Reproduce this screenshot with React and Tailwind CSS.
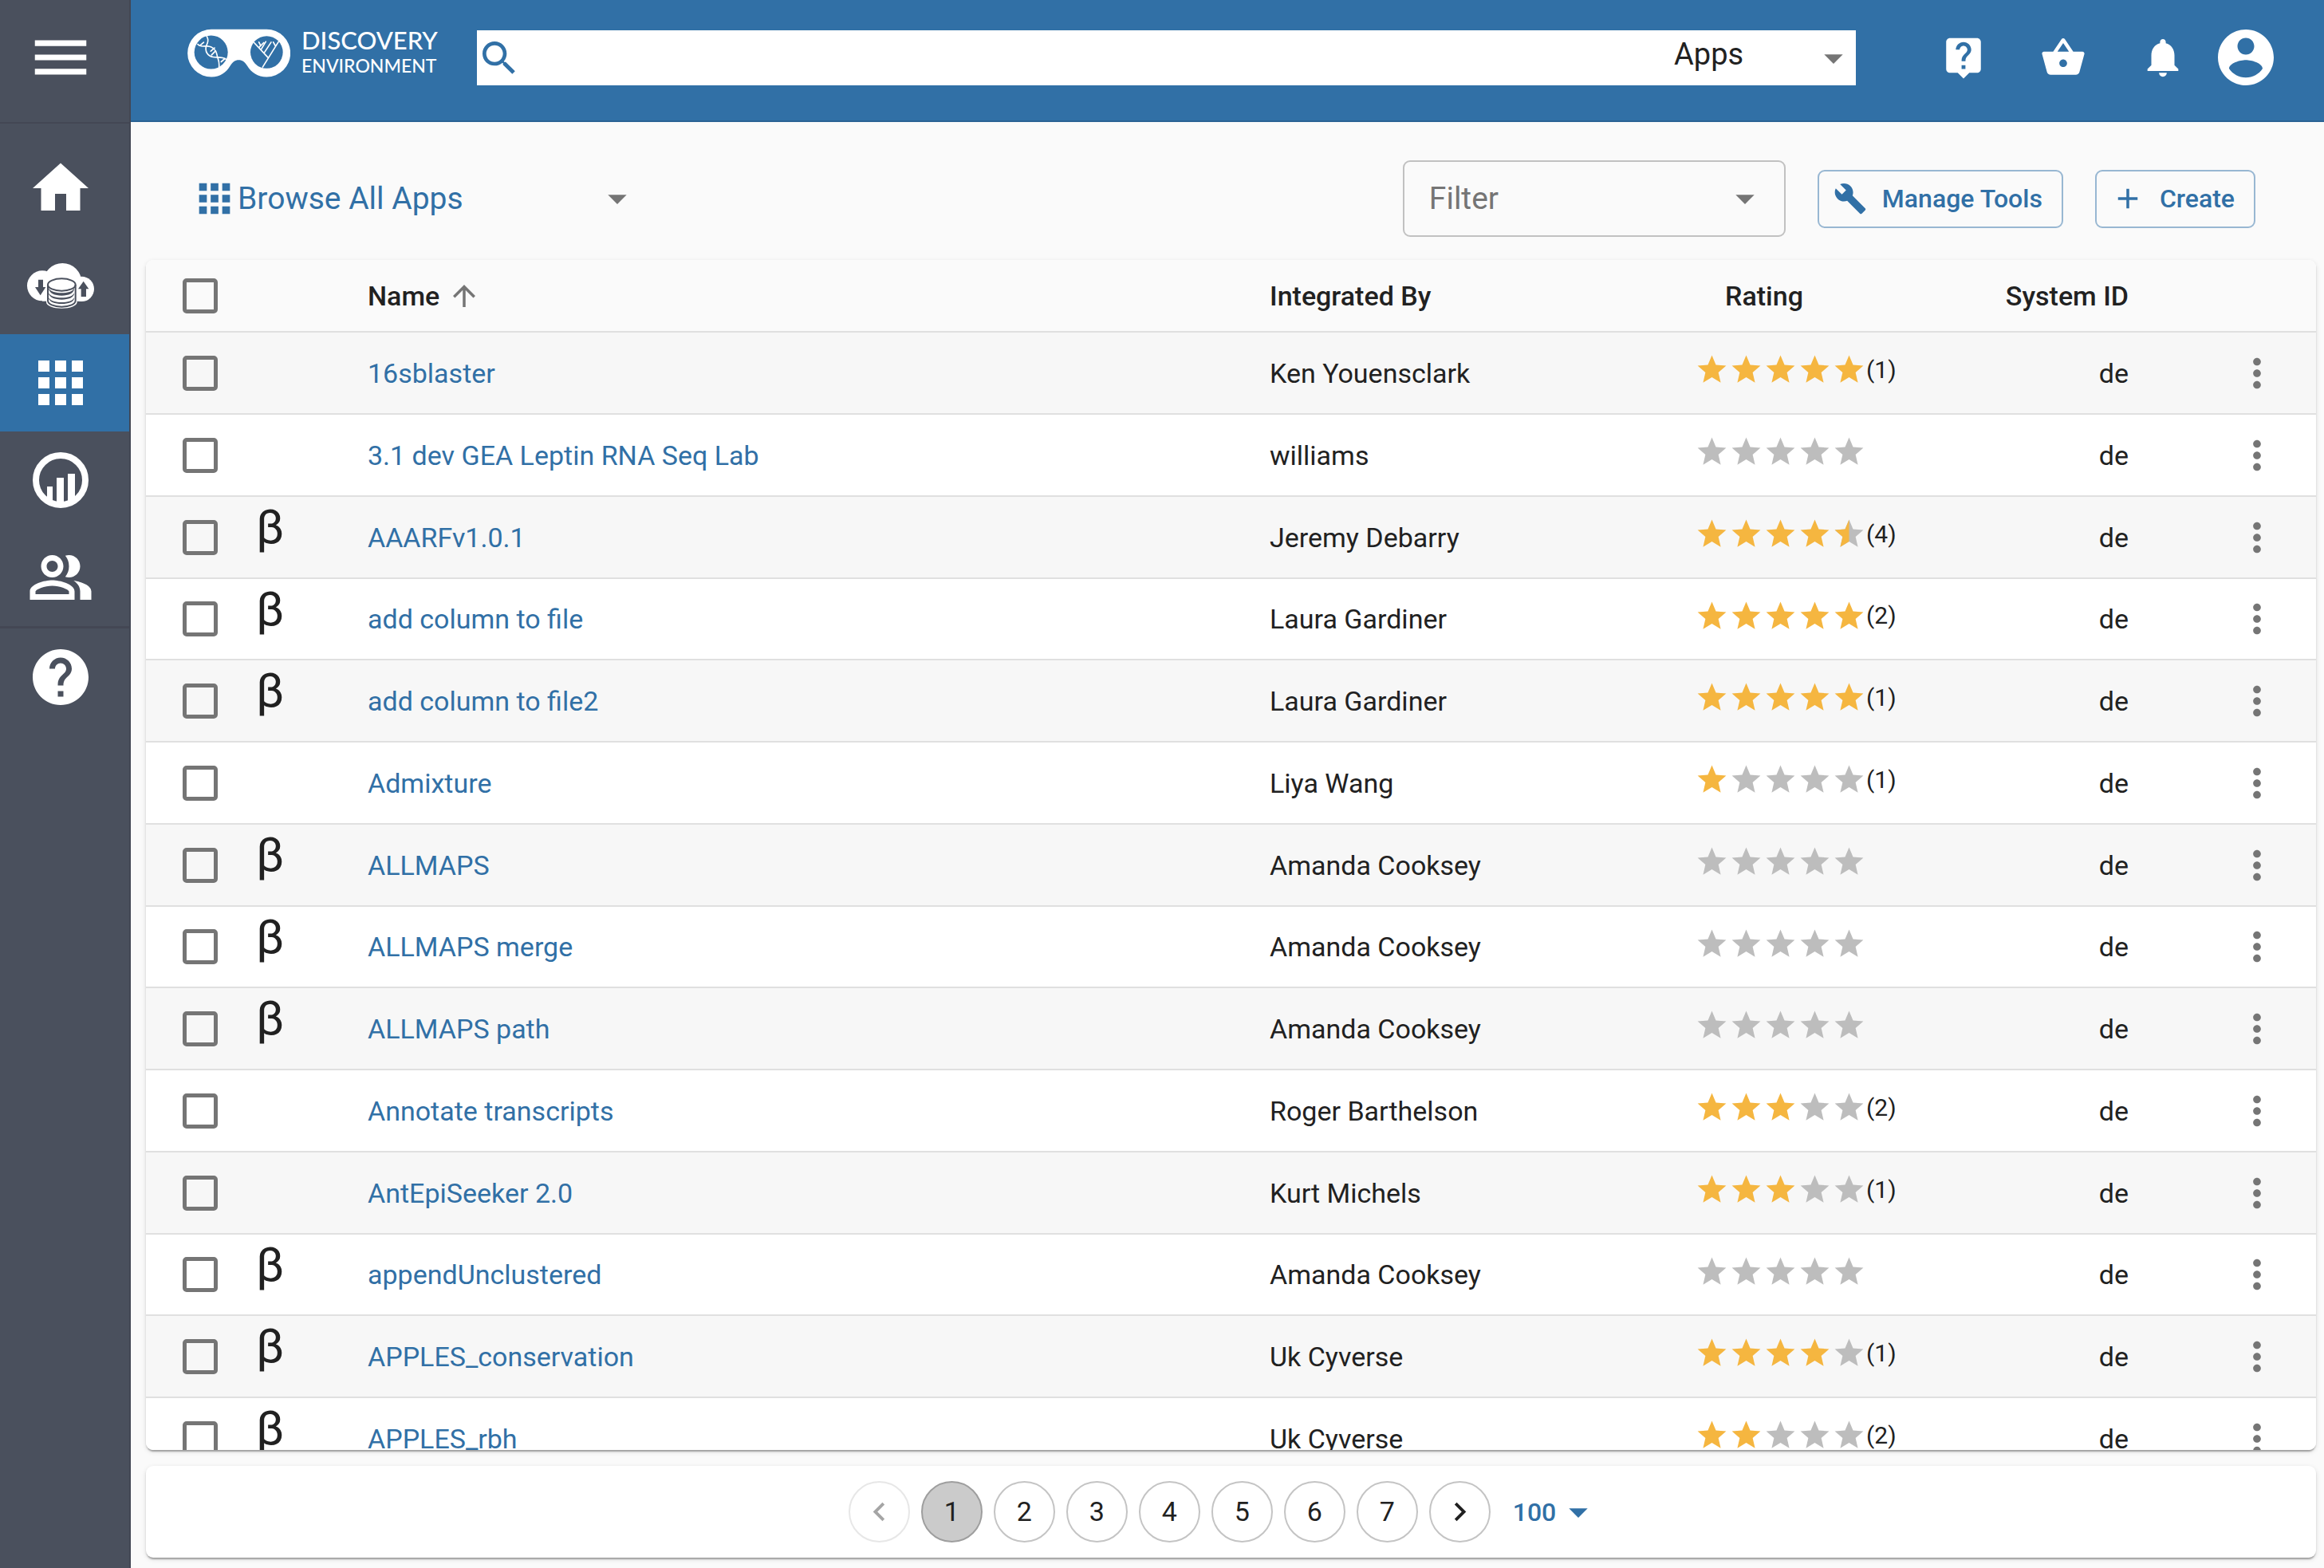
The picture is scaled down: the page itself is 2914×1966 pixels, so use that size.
import React from "react";

const PATHS = {
  menu: "M3 18h18v-2H3v2zm0-5h18v-2H3v2zm0-7v2h18V6H3z",
  home: "M10 20v-6h4v6h5v-8h3L12 3 2 12h3v8z",
  apps: "M4 8h4V4H4v4zm6 12h4v-4h-4v4zm-6 0h4v-4H4v4zm0-6h4v-4H4v4zm6 0h4v-4h-4v4zm6-10v4h4V4h-4zm-6 4h4V4h-4v4zm6 6h4v-4h-4v4zm0 6h4v-4h-4v4z",
  people:
    "M16.67 13.13C18.04 14.06 19 15.32 19 17v3h4v-3c0-2.18-3.57-3.47-6.33-3.87zM15 12c2.21 0 4-1.79 4-4s-1.79-4-4-4c-.47 0-.91.1-1.33.24a5.98 5.98 0 010 7.52c.42.14.86.24 1.33.24zM9 12c2.21 0 4-1.79 4-4s-1.79-4-4-4-4 1.79-4 4 1.79 4 4 4zm0-6c1.1 0 2 .9 2 2s-.9 2-2 2-2-.9-2-2 .9-2 2-2zM9 13c-2.67 0-8 1.34-8 4v3h16v-3c0-2.66-5.33-4-8-4zm6 5H3v-.99C3.2 16.29 6.3 15 9 15s5.8 1.29 6 2v1z",
  help: "M12 2C6.48 2 2 6.48 2 12s4.48 10 10 10 10-4.48 10-10S17.52 2 12 2zm1 17h-2v-2h2v2zm2.07-7.75l-.9.92C13.45 12.9 13 13.5 13 15h-2v-.5c0-1.1.45-2.1 1.17-2.83l1.24-1.26c.37-.36.59-.86.59-1.41 0-1.1-.9-2-2-2s-2 .9-2 2H8c0-2.21 1.79-4 4-4s4 1.79 4 4c0 .88-.36 1.68-.93 2.25z",
  search:
    "M15.5 14h-.79l-.28-.27C15.41 12.59 16 11.11 16 9.5 16 5.91 13.09 3 9.5 3S3 5.91 3 9.5 5.91 16 9.5 16c1.61 0 3.09-.59 4.23-1.57l.27.28v.79l5 4.99L20.49 19l-4.99-5zm-6 0C7.01 14 5 11.99 5 9.5S7.01 5 9.5 5 14 7.01 14 9.5 11.99 14 9.5 14z",
  dropDown: "M7 10l5 5 5-5z",
  liveHelp:
    "M19 2H5c-1.11 0-2 .9-2 2v14c0 1.1.89 2 2 2h4l3 3 3-3h4c1.1 0 2-.9 2-2V4c0-1.1-.9-2-2-2zm-6 16h-2v-2h2v2zm2.07-7.75l-.9.92C13.45 11.9 13 12.5 13 14h-2v-.5c0-1.1.45-2.1 1.17-2.83l1.24-1.26c.37-.36.59-.86.59-1.41 0-1.1-.9-2-2-2s-2 .9-2 2H8c0-2.21 1.79-4 4-4s4 1.79 4 4c0 .88-.36 1.68-.93 2.25z",
  basket:
    "M17.21 9l-4.38-6.56c-.19-.28-.51-.42-.83-.42-.32 0-.64.14-.83.43L6.79 9H2c-.55 0-1 .45-1 1 0 .09.01.18.04.27l2.54 9.27c.23.84 1 1.46 1.92 1.46h13c.92 0 1.69-.62 1.93-1.46l2.54-9.27L23 10c0-.55-.45-1-1-1h-4.79zM9 9l3-4.4L15 9H9zm3 8c-1.1 0-2-.9-2-2s.9-2 2-2 2 .9 2 2-.9 2-2 2z",
  bell: "M12 22c1.1 0 2-.9 2-2h-4c0 1.1.89 2 2 2zm6-6v-5c0-3.07-1.64-5.64-4.5-6.32V4c0-.83-.67-1.5-1.5-1.5s-1.5.67-1.5 1.5v.68C7.63 5.36 6 7.92 6 11v5l-2 2v1h16v-1l-2-2z",
  account:
    "M12 2C6.48 2 2 6.48 2 12s4.48 10 10 10 10-4.48 10-10S17.52 2 12 2zm0 3c1.66 0 3 1.34 3 3s-1.34 3-3 3-3-1.34-3-3 1.34-3 3-3zm0 14.2c-2.5 0-4.71-1.28-6-3.22.03-1.99 4-3.08 6-3.08 1.99 0 5.97 1.09 6 3.08-1.29 1.94-3.5 3.22-6 3.22z",
  wrench:
    "M22.7 19l-9.1-9.1c.9-2.3.4-5-1.5-6.9-2-2-5-2.4-7.4-1.3L9 6 6 9 1.6 4.7C.4 7.1.9 10.1 2.9 12.1c1.9 1.9 4.6 2.4 6.9 1.5l9.1 9.1c.4.4 1 .4 1.4 0l2.3-2.3c.5-.4.5-1.1.1-1.4z",
  plus: "M19 13h-6v6h-2v-6H5v-2h6V5h2v6h6v2z",
  arrowUp: "M4 12l1.41 1.41L11 7.83V20h2V7.83l5.58 5.59L20 12l-8-8-8 8z",
  star: "M12 17.27L18.18 21l-1.64-7.03L22 9.24l-7.19-.61L12 2 9.19 8.63 2 9.24l5.46 4.73L5.82 21z",
  more: "M12 8c1.1 0 2-.9 2-2s-.9-2-2-2-2 .9-2 2 .9 2 2 2zm0 2c-1.1 0-2 .9-2 2s.9 2 2 2 2-.9 2-2-.9-2-2-2zm0 6c-1.1 0-2 .9-2 2s.9 2 2 2 2-.9 2-2-.9-2-2-2z",
  prev: "M15.41 7.41L14 6l-6 6 6 6 1.41-1.41L10.83 12z",
  next: "M10 6L8.59 7.41 13.17 12l-4.58 4.59L10 18l6-6z",
};

function Icon({ name, className }) {
  return (
    <svg viewBox="0 0 24 24" fill="currentColor" aria-hidden="true" className={"shrink-0 " + className}>
      <path d={PATHS[name]} />
    </svg>
  );
}

function CloudDataIcon() {
  return (
    <svg viewBox="36 54 264 180" className="h-[60px] w-[88px]" aria-hidden="true">
      <g fill="#fff">
        <circle cx="99" cy="145" r="57" />
        <circle cx="175" cy="132" r="72" />
        <circle cx="247" cy="157" r="47" />
        <rect x="99" y="150" width="148" height="53" />
        <path d="M114 140h116v66c0 14-26 24-58 24s-58-10-58-24z" />
      </g>
      <g fill="#4a505d">
        <path d="M84 122h18v28h10l-20 31-20-31h12z" />
        <path d="M254 128l20 29h-10v29h-19v-29h-11z" />
        <path d="M122 158c10 14 28 18 50 18s40-4 48-18c-2 20-22 28-48 28s-46-8-50-28z" transform="translate(0 -4)" />
        <path d="M122 158c10 14 28 18 50 18s40-4 48-18c-2 18-22 25-48 25s-46-7-50-25z" transform="translate(0 14)" />
        <path d="M122 158c10 14 28 18 50 18s40-4 48-18c-2 18-22 24-48 24s-46-6-50-24z" transform="translate(0 31)" />
      </g>
      <g fill="none" stroke="#4a505d" strokeWidth="6">
        <ellipse cx="172" cy="141" rx="52" ry="23" fill="#fff" />
        <path d="M120 141v60c0 13 22 23 52 23s52-10 52-23v-60" />
      </g>
    </svg>
  );
}

function AnalyticsIcon() {
  return (
    <svg viewBox="0 0 84 84" className="size-[84px]" aria-hidden="true">
      <circle cx="42" cy="42" r="31" fill="none" stroke="#fff" strokeWidth="8" />
      <g fill="#fff">
        <path d="M25 50h7v20l-7-5z" />
        <path d="M37 39h9v31h-9z" />
        <path d="M51 34h9v31l-9 5z" />
      </g>
    </svg>
  );
}

function LogoMark() {
  return (
    <svg viewBox="45 54 387 182" className="h-[61px] w-[129px] shrink-0" aria-hidden="true">
      <path
        fill="#fff"
        d="M135 56H343a89 89 0 0 1 0 179c-34 0-58-17-73-42-10-16-18-22-32-22s-22 6-32 22c-15 25-37 42-71 42a89 89 0 0 1 0-179z"
      />
      <circle cx="134" cy="142" r="63" fill="#3170a6" />
      <circle cx="343" cy="142" r="61" fill="#3170a6" />
      <g fill="none" stroke="#fff" strokeWidth="5" strokeLinecap="round">
        <path d="M118 82c8 16 3 24-2 36-6 20 4 38 26 42 18 3 34-2 48 8" />
        <path d="M84 112c10 12 22 6 36 7 24 2 32 14 36 32 2 16 10 20 8 46" />
        <path d="M92 117l14-12M133 138l14-12M136 152l14-14M172 178l14-12" />
        <path d="M296 106l52 56M388 102l-60 96M322 132l18-30M334 144l26-40M314 104l6 12M368 104l8 14M316 122l16-16" />
      </g>
    </svg>
  );
}

const NAV = [
  { label: "Home", icon: <Icon name="home" className="size-[84px]" /> },
  { label: "Data", icon: <CloudDataIcon /> },
  { label: "Apps", icon: <Icon name="apps" className="size-[84px]" />, active: true },
  { label: "Analyses", icon: <AnalyticsIcon /> },
  { label: "Teams", icon: <Icon name="people" className="size-[84px]" /> },
];

function Sidebar() {
  return (
    <nav className="flex w-[164px] shrink-0 flex-col border-r-2 border-[#434754] bg-[#4a505d] text-white">
      <div className="flex h-[155px] shrink-0 items-start justify-center border-b-2 border-[#434754] pt-[29px] pr-[10px]">
        <button type="button" aria-label="Menu">
          <Icon name="menu" className="size-[86px]" />
        </button>
      </div>
      <div className="border-b-3 border-[#434754] pt-5">
        {NAV.map((item) => (
          <a
            key={item.label}
            href="#"
            aria-label={item.label}
            className={
              "flex h-[122px] items-center justify-center pr-[10px] " + (item.active ? "bg-[#3170a6]" : "")
            }
          >
            {item.icon}
          </a>
        ))}
      </div>
      <a href="#" aria-label="Help" className="flex h-[122px] items-center justify-center pr-[10px]">
        <Icon name="help" className="size-[84px]" />
      </a>
    </nav>
  );
}

function Header() {
  return (
    <header className="flex h-[153px] shrink-0 items-start border-b-2 border-[#2a6294] bg-[#3170a6] pl-[71px] pr-14 text-white">
      <a href="#" className="flex w-[363px] shrink-0 items-center gap-[14px] pt-[34px] font-['Lato',sans-serif] font-medium">
        <LogoMark />
        <span className="flex flex-col">
          <span className="text-[31px] leading-8">DISCOVERY</span>
          <span className="text-[23px] leading-8">ENVIRONMENT</span>
        </span>
      </a>
      <div className="mt-[38px] mr-[72px] flex h-[69px] min-w-0 flex-1 items-center bg-white">
        <Icon name="search" className="size-14 text-[#3170a6]" />
        <input type="text" aria-label="Search" className="h-full min-w-0 flex-1 text-[38px] text-[#212121] outline-none" />
        <div className="relative flex h-full w-[228px] items-center">
          <select
            aria-label="Search category"
            defaultValue="Apps"
            className="h-full w-full appearance-none pb-2 text-[38px] text-[#212121] outline-none"
          >
            <option>Apps</option>
          </select>
          <Icon name="dropDown" className="pointer-events-none absolute right-0 size-14 text-[#757575]" />
        </div>
      </div>
      {["liveHelp", "basket", "bell"].map((n) => (
        <button key={n} type="button" aria-label={n} className="mt-[30px] flex h-[84px] w-[125px] items-center justify-center">
          <Icon name={n} className="size-[58px]" />
        </button>
      ))}
      <button type="button" aria-label="Account" className="mt-[30px]">
        <Icon name="account" className="size-[84px]" />
      </button>
    </header>
  );
}

function ToolButton({ icon, children }) {
  return (
    <button
      type="button"
      className="flex h-[73px] items-center gap-[19px] rounded-[9px] border-2 border-[#98b7d2] pl-[18px] pr-6 text-[32px] font-medium text-[#3170a6]"
    >
      <Icon name={icon} className="size-[42px]" />
      {children}
    </button>
  );
}

function Toolbar() {
  return (
    <div className="flex items-center gap-10 pt-12 pr-[76px] pb-[29px] pl-[57px]">
      <div className="relative mr-auto flex w-[562px] items-center text-[#3170a6]">
        <Icon name="apps" className="size-[58px]" />
        <select aria-label="Browse" defaultValue="Browse All Apps" className="w-full appearance-none text-[39px] outline-none">
          <option>Browse All Apps</option>
        </select>
        <Icon name="dropDown" className="pointer-events-none absolute right-0 size-14 text-[#757575]" />
      </div>
      <div className="relative flex w-[480px] items-center">
        <select
          aria-label="Filter"
          defaultValue="Filter"
          className="h-24 w-full appearance-none rounded-[9px] border-2 border-[#c1c1c1] pl-[31px] text-[39px] text-[#757575] outline-none"
        >
          <option>Filter</option>
        </select>
        <Icon name="dropDown" className="pointer-events-none absolute right-[23px] size-14 text-[#757575]" />
      </div>
      <ToolButton icon="wrench">Manage Tools</ToolButton>
      <ToolButton icon="plus">Create</ToolButton>
    </div>
  );
}

const APPS = [
  { name: "16sblaster", by: "Ken Youensclark", rating: 5, votes: 1 },
  { name: "3.1 dev GEA Leptin RNA Seq Lab", by: "williams", rating: 0 },
  { name: "AAARFv1.0.1", by: "Jeremy Debarry", rating: 4.5, votes: 4, beta: true },
  { name: "add column to file", by: "Laura Gardiner", rating: 5, votes: 2, beta: true },
  { name: "add column to file2", by: "Laura Gardiner", rating: 5, votes: 1, beta: true },
  { name: "Admixture", by: "Liya Wang", rating: 1, votes: 1 },
  { name: "ALLMAPS", by: "Amanda Cooksey", rating: 0, beta: true },
  { name: "ALLMAPS merge", by: "Amanda Cooksey", rating: 0, beta: true },
  { name: "ALLMAPS path", by: "Amanda Cooksey", rating: 0, beta: true },
  { name: "Annotate transcripts", by: "Roger Barthelson", rating: 3, votes: 2 },
  { name: "AntEpiSeeker 2.0", by: "Kurt Michels", rating: 3, votes: 1 },
  { name: "appendUnclustered", by: "Amanda Cooksey", rating: 0, beta: true },
  { name: "APPLES_conservation", by: "Uk Cyverse", rating: 4, votes: 1, beta: true },
  { name: "APPLES_rbh", by: "Uk Cyverse", rating: 2, votes: 2, beta: true },
];

function Star({ fill }) {
  return (
    <svg viewBox="0 0 24 24" className="size-[43px] shrink-0" aria-hidden="true">
      <path d={PATHS.star} fill={fill === 1 ? "#f5b640" : "#bdbdbd"} />
      {fill === 0.5 && <path d="M12 2v15.27L5.82 21l1.64-7.03L2 9.24l7.19-.61z" fill="#f5b640" />}
    </svg>
  );
}

function Rating({ value, votes }) {
  return (
    <div className="flex items-center pb-2" aria-label={value + " stars"}>
      {[0, 1, 2, 3, 4].map((i) => (
        <Star key={i} fill={Math.max(0, Math.min(1, value - i))} />
      ))}
      {votes && <span className="text-[30px] leading-10">({votes})</span>}
    </div>
  );
}

function Check({ label }) {
  return (
    <input
      type="checkbox"
      aria-label={label}
      className="block size-11 appearance-none rounded-[5px] border-5 border-[#757575]"
    />
  );
}

function AppsTable() {
  return (
    <section className="min-h-0 flex-1 overflow-hidden rounded-[9px] bg-white shadow-[0_4px_2px_-2px_rgba(0,0,0,0.2),0_2px_2px_0_rgba(0,0,0,0.14),0_2px_6px_0_rgba(0,0,0,0.12)]">
      <table className="w-full table-fixed border-separate border-spacing-0 text-left text-[34px] leading-10 text-[#212121] [&_td]:border-b-2 [&_td]:border-[#e0e0e0] [&_th]:border-b-2 [&_th]:border-[#e0e0e0]">
        <thead>
          <tr className="h-[91px] bg-[#fafafa] [&>th]:font-medium">
            <th className="w-[132px] pl-[46px]">
              <Check label="Select all" />
            </th>
            <th className="w-[109px]" />
            <th className="pl-[37px]" aria-sort="ascending">
              <button type="button" className="flex items-center gap-[10px]">
                Name
                <Icon name="arrowUp" className="size-[42px] text-[#757575]" />
              </button>
            </th>
            <th className="w-[533px] pl-[37px]">Integrated By</th>
            <th className="w-[382px] pl-[75px]">Rating</th>
            <th className="w-[236px] pr-[37px] text-right whitespace-nowrap">System ID</th>
            <th className="w-[198px]" />
          </tr>
        </thead>
        <tbody>
          {APPS.map((app) => (
            <tr key={app.name} className="h-[103px] odd:bg-[#f7f7f7] even:bg-white nth-[4n]:h-[102px]">
              <td className="pl-[46px]">
                <Check label={"Select " + app.name} />
              </td>
              <td className="pl-[6px] text-[60px] leading-[76px] align-top">{app.beta && "β"}</td>
              <td className="pl-[37px]">
                <a href="#" className="text-[#3170a6]">
                  {app.name}
                </a>
              </td>
              <td className="pl-[37px]">{app.by}</td>
              <td className="pl-[37px]">
                <Rating value={app.rating} votes={app.votes} />
              </td>
              <td className="pr-[37px] text-right">de</td>
              <td className="pr-[45px]">
                <button type="button" aria-label={"More actions for " + app.name} className="ml-auto block text-[#757575]">
                  <Icon name="more" className="size-[58px]" />
                </button>
              </td>
            </tr>
          ))}
        </tbody>
      </table>
    </section>
  );
}

function Pagination() {
  return (
    <footer className="mt-5 flex shrink-0 items-center justify-center gap-[14px] rounded-[9px] bg-white py-[19px] text-[34px] text-[#212121] shadow-[0_4px_2px_-2px_rgba(0,0,0,0.2),0_2px_2px_0_rgba(0,0,0,0.14),0_2px_6px_0_rgba(0,0,0,0.12)]">
      <button
        type="button"
        disabled
        aria-label="Previous page"
        className="flex size-[77px] items-center justify-center rounded-full border-2 border-[#c4c4c4] opacity-40"
      >
        <Icon name="prev" className="size-[47px]" />
      </button>
      {[1, 2, 3, 4, 5, 6, 7].map((n) => (
        <button
          key={n}
          type="button"
          className={
            "flex size-[77px] items-center justify-center rounded-full border-2 " +
            (n === 1 ? "border-[#9e9e9e] bg-[#cbcbcb]" : "border-[#c4c4c4]")
          }
        >
          {n}
        </button>
      ))}
      <button
        type="button"
        aria-label="Next page"
        className="flex size-[77px] items-center justify-center rounded-full border-2 border-[#c4c4c4]"
      >
        <Icon name="next" className="size-[47px]" />
      </button>
      <button type="button" className="flex items-center pr-4 pl-[14px] text-[32px] font-medium text-[#3170a6]">
        100
        <Icon name="dropDown" className="size-14" />
      </button>
    </footer>
  );
}

export default function App() {
  return (
    <div className="flex h-screen bg-[#fafafa] font-['Roboto',sans-serif]">
      <Sidebar />
      <div className="flex min-w-0 flex-1 flex-col">
        <Header />
        <main className="flex min-h-0 flex-1 flex-col pr-[10px] pb-[13px] pl-[19px]">
          <Toolbar />
          <AppsTable />
          <Pagination />
        </main>
      </div>
    </div>
  );
}
